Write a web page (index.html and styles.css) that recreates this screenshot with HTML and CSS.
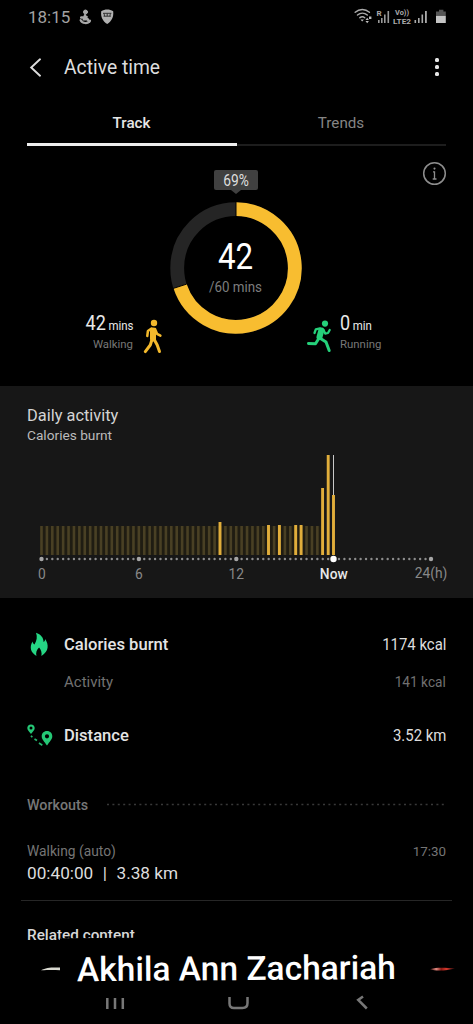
FILE: index.html
```
<!DOCTYPE html>
<html lang="en">
<head>
<meta charset="utf-8">
<title>Active time</title>
<link rel="stylesheet" href="styles.css">
</head>
<body>
<div class="screen">
  <div class="status">
    <span class="clock">18:15</span>
    <svg class="status-left" width="36" height="18" viewBox="0 0 36 18">
      <g fill="none" stroke="#a8a8a8" stroke-linecap="round">
        <circle cx="7.5" cy="4" r="2" fill="#a8a8a8"/>
        <path d="M7 7.2 6 11.2h3.600l1.600 2.400M3.200 9.600l5.400-.6" stroke-width="2.500"/>
        <path d="M2.600 12.200c1.400 3.600 7.400 3.800 9.400.4" stroke-width="2.200"/>
      </g>
      <path fill="#b0b0b0" d="M23.200 3.200c3.600-2.200 8.400-2.200 12 0 .6 6-1.600 10-6 12.800-4.400-2.800-6.600-6.800-6-12.800z"/>
      <path fill="none" stroke="#333" stroke-width="1" d="M25 5.300h8.400M25.500 8.200h7.400M29.200 5.300v2.900M26 5.300l.6 3M32.400 5.300l-.6 3"/>
    </svg>
    <svg class="status-right" width="94" height="20" viewBox="0 0 94 20">
      <g fill="none" stroke="#aaa" stroke-width="1.500" stroke-linecap="round">
        <path d="M2.200 5.200c4.200-3.600 10-3.600 14.200 0M4.500 8c2.900-2.500 6.900-2.500 9.800 0M6.900 10.700c1.500-1.200 3.400-1.200 4.800 0"/>
      </g>
      <path fill="#bbb" d="M7.500 12.500h3.400l-1.700 2zM12.500 13l1.700-2.200 1.700 2.200zM12.500 14l1.700 2.200 1.700-2.200zM16 9.500h2.400V12H16z"/>
      <text x="23.500" y="8.500" font-size="8" font-weight="700" fill="#aaa">R</text>
      <g fill="#999"><path d="M25 13h1.600v3H25zM28 11h1.600v5H28zM31 7.500h1.600V16H31zM34.500 4h1.600v12h-1.600z"/></g>
      <text x="42" y="7.500" font-size="7" font-weight="700" fill="#aaa" textLength="14" lengthAdjust="spacingAndGlyphs">Vo))</text>
      <text x="40" y="16.800" font-size="7.500" font-weight="700" fill="#aaa" textLength="18" lengthAdjust="spacingAndGlyphs">LTE2</text>
      <g fill="#aaa"><path d="M61.500 13h1.600v3h-1.600zM65 11h1.600v5H65zM68.500 7.500h1.600V16h-1.600zM72 4h1.800v12H72z"/></g>
      <path fill="#555" d="M86 2.800h4.400v1.600h2.400v4.400H83V4.400h3z"/>
      <path fill="#c4c4c4" d="M83 8.800h9.800V16H83z"/>
    </svg>
  </div>

  <header class="header">
    <svg class="back" width="13" height="20" viewBox="0 0 13 20"><path d="M12 1.300 3.200 9.500l8.800 8.200" fill="none" stroke="#ddd" stroke-width="1.900" stroke-linecap="round"/></svg>
    <h1>Active time</h1>
    <div class="more"><i></i><i></i><i></i></div>
  </header>

  <nav class="tabs">
    <div class="tab active"><span class="track">Track</span></div>
    <div class="tab"><span class="trends">Trends</span></div>
  </nav>

  <section class="summary">
    <svg class="info" width="26" height="26" viewBox="0 0 26 26"><circle cx="13.500" cy="12.500" r="10.800" fill="none" stroke="#8d8d8d" stroke-width="1.500"/><circle cx="13.500" cy="7.600" r="1.050" fill="#8d8d8d"/><path d="M12 10.800h1.500v7M11.700 18h3.800" fill="none" stroke="#8d8d8d" stroke-width="1.300"/></svg>
    <div class="activity walk">
      <div class="figures">
        <div class="amount"><b>42</b><span>mins</span></div>
        <div class="kind">Walking</div>
      </div>
      <svg width="20" height="35" viewBox="0 0 20 35">
        <circle cx="11" cy="4" r="3.200" fill="#f3b92c"/>
        <g fill="none" stroke="#f3b92c" stroke-linecap="round" stroke-linejoin="round">
          <path d="M10 11.500v8" stroke-width="6"/>
          <path d="M8.500 9.500 4.900 12 4.300 17M12 10l2 4.800 3.400 1.900" stroke-width="2.500"/>
          <path d="M9 20.500 7.300 26l-5 6.600M11.200 20.500l3 5.500 2.300 6.500" stroke-width="3"/>
        </g>
      </svg>
    </div>
    <div class="goal">
      <div class="tip"><span>69%</span></div>
      <svg class="ring" width="132" height="132" viewBox="0 0 132 132">
        <circle cx="66" cy="66" r="58.800" fill="none" stroke="#252525" stroke-width="13.800"/>
        <path d="M66 7.200A58.800 58.800 0 1 1 10.080 84.170" fill="none" stroke="#f8bd30" stroke-width="13.800"/>
        <path d="M66 0v14.500M2.700 86.600l14-4.500" stroke="#000" stroke-width="1"/>
      </svg>
      <div class="center"><b>42</b><span>/60 mins</span></div>
    </div>
    <div class="activity run">
      <svg width="26" height="34" viewBox="0 0 26 34">
        <circle cx="19" cy="4.600" r="3.100" fill="#25d07a"/>
        <g fill="none" stroke="#25d07a" stroke-linecap="round" stroke-linejoin="round">
          <path d="M15.300 11.500 13.500 18" stroke-width="6"/>
          <path d="M14 9.300 9.800 10.300 8.500 14M17.600 11l1.600 3.600 2.800-.6 1.700-3" stroke-width="2.300"/>
          <path d="M12.500 20 9.500 24.800 2.500 24.400M14.500 19.500 20 23 23.200 31.500" stroke-width="3"/>
        </g>
      </svg>
      <div class="figures">
        <div class="amount"><b>0</b><span>min</span></div>
        <div class="kind">Running</div>
      </div>
    </div>
  </section>

  <section class="daily">
    <h2>Daily activity</h2>
    <h3>Calories burnt</h3>
    <svg class="chart" width="473" height="135" viewBox="0 452 473 135">
      <path d="M40 540.500H321" stroke="#1f1c12" stroke-width="29"/>
      <path d="M40.200 540.500H320.500" stroke="#494024" stroke-width="29" stroke-dasharray="2.600 2.809"/>
      <g stroke="#e1ae3b" stroke-width="2.900">
        <path d="M220 522v33M268.500 525v30M279.400 525v30M295.700 525v30M301.100 525v30M322.600 488v67M328.200 455v100M333.500 495v60"/>
      </g>
      <path d="M333.500 455v40" stroke="#c8c8c8" stroke-width="1"/>
      <path d="M41.500 559H431" stroke="#8d8d8d" stroke-width="2.400" stroke-linecap="round" stroke-dasharray="0 5.409"/>
      <g fill="#a6a6a6"><circle cx="41.500" cy="559" r="2.200"/><circle cx="138.900" cy="559" r="2.200"/><circle cx="236.300" cy="559" r="2.200"/><circle cx="431" cy="559" r="2.200"/></g>
      <circle cx="333.500" cy="559" r="3.200" fill="#fff"/>
      <g font-size="13.800" fill="#888" text-anchor="middle">
        <text x="42" y="579">0</text><text x="138.900" y="579">6</text><text x="236.300" y="579">12</text>
        <text x="333.800" y="579" fill="#e8e8e8" font-weight="500">Now</text><text x="431" y="578">24(h)</text>
      </g>
    </svg>
  </section>

  <section class="stats">
    <div class="row r1">
      <svg width="27" height="27" viewBox="0 0 27 27"><path fill="#25d684" d="M9 1.800c5 1.600 7.500 5 7.600 9.200 1-.7 1.500-1.700 1.600-3.100 3.600 5.600 4 12.200-3.800 17 .7-3.600-.4-6.500-2.300-8.500-2.400 2.200-3.500 4.900-2.700 8.500-5.600-3-7.300-8.500-3.900-14.300.3 1.500.9 2.400 2 2.900 2.300-4 3-7.500 1.500-11.700z"/></svg>
      <span class="name">Calories burnt</span><span class="value">1174 kcal</span>
    </div>
    <div class="row r2"><span class="name">Activity</span><span class="value">141 kcal</span></div>
    <div class="row r3">
      <svg width="27" height="27" viewBox="0 0 27 27">
        <path fill="#25c876" fill-rule="evenodd" d="M4 2.500c2.300 0 3.700 1.600 3.700 3.600 0 2-1.700 3.500-3.700 5.900C2 9.600.3 8.100.3 6.100c0-2 1.400-3.600 3.700-3.600zM4 4.600a1.500 1.500 0 1 0 0 3 1.500 1.500 0 0 0 0-3zM20 9c3.300 0 5.300 2.300 5.300 5.200 0 3.200-2.600 5.300-5.300 9.300-2.700-4-5.300-6.100-5.300-9.300C14.700 11.300 16.700 9 20 9zm0 3.200a2.100 2.100 0 1 0 0 4.200 2.100 2.100 0 0 0 0-4.200z"/>
        <path fill="none" stroke="#25b76d" stroke-width="1.700" d="m4 13.700 1.300 1.600M7.500 17l2.500 1.500M12 21l3.300 2.300"/>
      </svg>
      <span class="name">Distance</span><span class="value">3.52 km</span>
    </div>
  </section>

  <section class="workouts">
    <div class="heading"><span>Workouts</span><svg width="341" height="4" viewBox="0 0 341 4"><path d="M1 1.500H341" stroke="#383838" stroke-width="1.400" stroke-dasharray="2 3.400"/></svg></div>
    <div class="entry"><span class="auto">Walking (auto)</span><span class="time">17:30</span></div>
    <div class="result"><span>00:40:00</span><span>|</span><span>3.38 km</span></div>
  </section>

  <section class="related">
    <h3>Related content</h3>
    <svg class="slivers" width="473" height="8" viewBox="0 0 473 8">
      <defs><linearGradient id="red"><stop offset="0" stop-color="#411"/><stop offset=".25" stop-color="#e08a80"/><stop offset=".45" stop-color="#8a1a15"/><stop offset=".65" stop-color="#d8382c"/><stop offset="1" stop-color="#411"/></linearGradient></defs>
      <path fill="#d8d8d0" d="M41 6.300c5-2.800 10-3 19-2.800v2.800c-7-.4-12-.2-19 0z"/>
      <path fill="url(#red)" d="M430 5.300c6-2.200 15-1.700 25-.8-8 2.200-19 3-25 .8z"/>
    </svg>
    <div class="banner"><span>Akhila Ann Zachariah</span></div>
  </section>

  <svg class="navbar" width="473" height="36" viewBox="0 988 473 36">
    <g fill="none" stroke="#777" stroke-width="2.500">
      <path d="M107.300 998v11M115 998v11M122.800 998v11"/>
      <path d="M229.500 997v6.500q0 4.500 4.500 4.500h8.500q5 0 5-5v-6"/>
      <path d="M363 996.500 358.200 1000l8.600 8.500"/>
    </g>
  </svg>
</div>
</body>
</html>
```
FILE: styles.css
```
* { box-sizing: border-box; margin: 0; padding: 0; }
body { background: #000; font-family: Roboto, sans-serif; }
.screen { width: 473px; height: 1024px; overflow: hidden; background: #000; display: flex; flex-direction: column; color: #ddd; white-space: nowrap; }
svg { display: block; flex: none; }
h1, h2, h3 { font-weight: 400; }

.status { height: 34px; display: flex; align-items: center; padding: 0 26px 0 28px; }
.clock { font-size: 17px; color: #a2a2a2; }
.status-left { margin-left: 8px; }
.status-right { margin-left: auto; }

.header { height: 67px; display: flex; align-items: center; padding: 0 34px 0 28px; }
.header h1 { margin-left: 23px; font-size: 19.3px; color: #ddd; }
.more { margin-left: auto; display: grid; gap: 3px; padding-bottom: 1px; }
.more i { width: 4px; height: 4px; border-radius: 1.5px; background: #e6e6e6; }

.tabs { height: 45px; margin: 0 27px; display: grid; grid-template-columns: 210px 1fr; }
.tab { display: flex; justify-content: center; align-self: end; height: 44px; padding: 11px 1px 0 0; line-height: 20px; font-size: 15.2px; color: #858585; border-bottom: 2px solid #1d1d1d; }
.tab.active { height: 45px; padding: 12px 1px 0 0; color: #e6e6e6; font-weight: 500; border-bottom: 3px solid #eee; }

.summary { height: 240px; position: relative; display: grid; grid-template-columns: 170px 132px 1fr; }
.info { position: absolute; right: 26px; top: 15px; }
.goal { position: relative; padding-top: 24px; }
.tip { width: 44px; height: 20px; margin: 0 auto 12px; border-radius: 2px; background: #404040; color: #ddd; font-size: 16px; line-height: 21px; text-align: center; position: relative; }
.tip span { display: block; transform: scaleX(.86); }
.tip::after { content: ""; position: absolute; left: 17px; top: 20px; border: 5px solid transparent; border-top: 4px solid #404040; border-bottom: 0; }
.center { position: absolute; inset: 90px 1px auto 0; text-align: center; display: grid; }
.center b { font-size: 36px; font-weight: 400; line-height: 42px; color: #fff; transform: scaleX(.87); }
.center span { font-size: 15px; line-height: 18px; color: #7d7d7d; transform: scaleX(.89); }
.activity { display: flex; padding-top: 165px; }
.walk { justify-content: flex-end; gap: 10px; padding-right: 7px; }
.run { gap: 8px; padding-left: 4px; }
.activity > svg { margin-top: 8px; }
.amount { height: 24px; line-height: 24px; display: flex; align-items: baseline; gap: 3px; color: #e8e8e8; transform: scaleX(.88); transform-origin: left; }
.walk .amount { transform-origin: right; }
.amount b { font-size: 20.500px; font-weight: 400; }
.amount span { font-size: 13px; }
.kind { font-size: 11.400px; line-height: 18px; color: #777; }
.walk .figures { display: flex; flex-direction: column; align-items: flex-end; }

.daily { height: 212px; background: #171717; padding-top: 19px; }
.daily h2 { padding-left: 27px; font-size: 16.400px; line-height: 21px; color: #d4d4d4; }
.daily h3 { padding-left: 27px; font-size: 13.700px; line-height: 18px; color: #bbb; }
.chart { margin-top: 8px; }

.stats { height: 180px; padding: 27px 27px 0; }
.row { display: flex; align-items: center; }
.row .name { margin-left: 10px; }
.row .value { margin-left: auto; transform-origin: right; transform: scaleX(.9); color: #ddd; font-size: 16.600px; }
.r1, .r3 { height: 39px; font-size: 16.600px; font-weight: 500; color: #e4e4e4; }
.r1 .value, .r3 .value { font-weight: 400; }
.r2 { height: 36px; padding-left: 27px; font-size: 15px; color: #717171; }
.r2 .value { font-size: 15.200px; color: #717171; }
.r3 { margin-top: 16px; }

.workouts { height: 123px; margin: 0 21px; padding: 16px 6px 0 6px; border-bottom: 1px solid #262626; }
.heading { display: flex; align-items: center; justify-content: space-between; height: 22px; font-size: 14.300px; font-weight: 500; color: #777; }
.heading svg { margin-right: -1px; }
.entry { margin-top: 24px; display: flex; justify-content: space-between; height: 22px; line-height: 22px; font-size: 13.800px; color: #757575; }
.entry .time { font-size: 13.400px; line-height: 23px; }
.result { display: flex; gap: 9.500px; font-size: 17.200px; line-height: 23px; color: #ddd; }

.related { height: 87px; padding: 24px 0 0; position: relative; }
.related h3 { padding-left: 27px; font-size: 15.300px; line-height: 20px; font-weight: 500; color: #d8d8d8; }
.slivers { margin-top: 19px; }
.banner { position: absolute; left: 60px; top: 36px; width: 361px; height: 54px; background: #000; transform: rotate(-.4deg); display: flex; align-items: center; padding: 8px 0 0 17px; color: #fff; font-size: 33.500px; font-weight: 500; }
.navbar { position: relative; }
```
